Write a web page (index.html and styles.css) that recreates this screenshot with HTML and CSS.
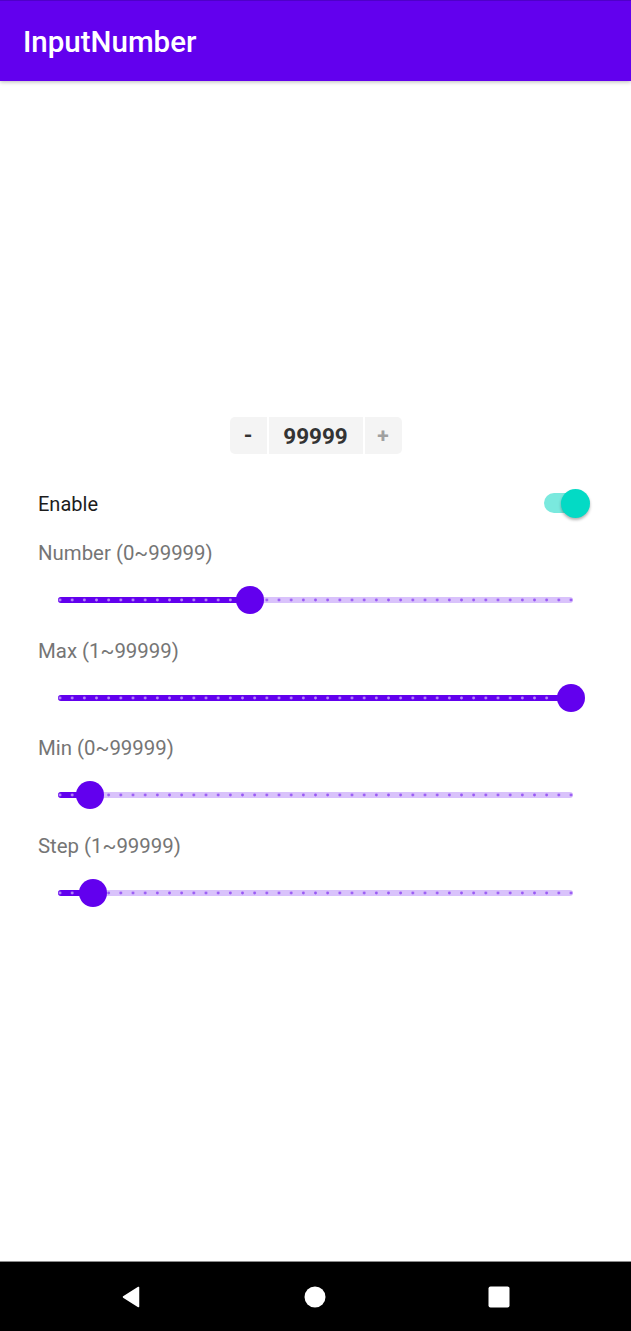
FILE: index.html
```html
<!DOCTYPE html>
<html lang="en">
<head>
<meta charset="utf-8">
<title>InputNumber</title>
<link rel="stylesheet" href="styles.css">
</head>
<body>
<svg class="defs" width="0" height="0" aria-hidden="true">
  <defs>
    <pattern id="tick-in" patternUnits="userSpaceOnUse" x="-4.0833" y="21" width="12.1667" height="6">
      <circle cx="6.0833" cy="3" r="1.4" fill="rgba(98,0,238,0.55)"/>
    </pattern>
    <pattern id="tick-act" patternUnits="userSpaceOnUse" x="-4.0833" y="21" width="12.1667" height="6">
      <circle cx="6.0833" cy="3" r="1.4" fill="rgba(255,255,255,0.55)"/>
    </pattern>
  </defs>
</svg>
<div class="app">
  <header class="appbar">
    <h1 class="appbar-title">InputNumber</h1>
  </header>
  <main class="content">
    <div class="stepper">
      <div class="stepper-btn minus">-</div>
      <div class="stepper-value">99999</div>
      <div class="stepper-btn plus">+</div>
    </div>
    <div class="enable-row">
      <span class="enable-label">Enable</span>
      <div class="switch"><span class="switch-track"></span><span class="switch-thumb"></span></div>
    </div>
    <div class="fields">
      <div class="field">
        <div class="field-label">Number (0~99999)</div>
        <svg class="slider" width="515" height="48" viewBox="0 0 515 48">
          <rect x="0" y="21" width="515" height="6" rx="3" class="track-in"/>
          <rect x="0" y="21" width="515" height="6" fill="url(#tick-in)"/>
          <rect x="0" y="21" width="192" height="6" rx="3" class="track-act"/>
          <rect x="0" y="21" width="192" height="6" fill="url(#tick-act)"/>
          <circle cx="192" cy="24" r="14" class="thumb"/>
        </svg>
      </div>
      <div class="field">
        <div class="field-label">Max (1~99999)</div>
        <svg class="slider" width="515" height="48" viewBox="0 0 515 48">
          <rect x="0" y="21" width="515" height="6" rx="3" class="track-in"/>
          <rect x="0" y="21" width="515" height="6" fill="url(#tick-in)"/>
          <rect x="0" y="21" width="513" height="6" rx="3" class="track-act"/>
          <rect x="0" y="21" width="513" height="6" fill="url(#tick-act)"/>
          <circle cx="513" cy="24" r="14" class="thumb"/>
        </svg>
      </div>
      <div class="field">
        <div class="field-label">Min (0~99999)</div>
        <svg class="slider" width="515" height="48" viewBox="0 0 515 48">
          <rect x="0" y="21" width="515" height="6" rx="3" class="track-in"/>
          <rect x="0" y="21" width="515" height="6" fill="url(#tick-in)"/>
          <rect x="0" y="21" width="32" height="6" rx="3" class="track-act"/>
          <rect x="0" y="21" width="32" height="6" fill="url(#tick-act)"/>
          <circle cx="32" cy="24" r="14" class="thumb"/>
        </svg>
      </div>
      <div class="field">
        <div class="field-label">Step (1~99999)</div>
        <svg class="slider" width="515" height="48" viewBox="0 0 515 48">
          <rect x="0" y="21" width="515" height="6" rx="3" class="track-in"/>
          <rect x="0" y="21" width="515" height="6" fill="url(#tick-in)"/>
          <rect x="0" y="21" width="35" height="6" rx="3" class="track-act"/>
          <rect x="0" y="21" width="35" height="6" fill="url(#tick-act)"/>
          <circle cx="35" cy="24" r="14" class="thumb"/>
        </svg>
      </div>
    </div>
  </main>
  <nav class="navbar">
    <svg class="nav-icon" width="22" height="22" viewBox="0 0 22 22"><path d="M18.5 1.5 L18.5 20.5 L3.5 11 Z" fill="#fff" stroke="#fff" stroke-width="1.5" stroke-linejoin="round"/></svg>
    <svg class="nav-icon" width="22" height="22" viewBox="0 0 22 22"><circle cx="11" cy="11" r="10.5" fill="#fff"/></svg>
    <svg class="nav-icon" width="22" height="22" viewBox="0 0 22 22"><rect x="0.5" y="0.5" width="21" height="21" rx="2" fill="#fff"/></svg>
  </nav>
</div>
</body>
</html>
```

FILE: styles.css
```css
* {
  box-sizing: border-box;
  margin: 0;
  padding: 0;
}

html, body {
  width: 631px;
  height: 1331px;
}

body {
  font-family: Roboto, "Noto Sans", sans-serif;
  background: #ffffff;
  overflow: hidden;
}

.defs {
  position: absolute;
  width: 0;
  height: 0;
}

.app {
  display: flex;
  flex-direction: column;
  height: 1331px;
}

.appbar {
  height: 81px;
  flex: none;
  background: #6200ee;
  border-top: 1px solid #4f00c8;
  box-shadow: 0 1px 4px rgba(0, 0, 0, 0.28);
  position: relative;
  z-index: 1;
  padding: 24px 0 0 23px;
}

.appbar-title {
  color: #ffffff;
  font-size: 29.5px;
  font-weight: 500;
  line-height: 34px;
}

.content {
  flex: 1;
  padding-top: 336px;
}

.stepper {
  display: flex;
  justify-content: center;
  gap: 2px;
}

.stepper-btn,
.stepper-value {
  height: 37px;
  background: #f4f4f4;
  display: flex;
  align-items: center;
  justify-content: center;
  font-weight: 700;
}

.stepper-btn {
  width: 37px;
  font-size: 22px;
}

.stepper-btn.minus {
  border-radius: 5px 0 0 5px;
  color: #333333;
}

.stepper-btn.plus {
  border-radius: 0 5px 5px 0;
  color: #a0a0a0;
  font-size: 21px;
}

.stepper-value {
  width: 94px;
  font-size: 22.5px;
  color: #333333;
}

.enable-row {
  display: flex;
  align-items: center;
  justify-content: space-between;
  height: 40px;
  margin-top: 30px;
  padding: 0 41px 0 38px;
}

.enable-label {
  font-size: 20px;
  line-height: 24px;
  color: #1c1c1c;
}

.switch {
  position: relative;
  width: 46px;
  height: 29px;
  margin-top: -2px;
}

.switch-track {
  position: absolute;
  left: 0;
  top: 4.5px;
  width: 40px;
  height: 20px;
  border-radius: 10px;
  background: #7ae9de;
}

.switch-thumb {
  position: absolute;
  right: 0;
  top: 0;
  width: 29px;
  height: 29px;
  border-radius: 50%;
  background: #03dac5;
  box-shadow: 0 2px 3px rgba(0, 0, 0, 0.3);
}

.fields {
  margin-top: 17px;
  display: flex;
  flex-direction: column;
  gap: 14.7px;
}

.field {
  display: flex;
  flex-direction: column;
}

.field-label {
  padding-left: 38px;
  font-size: 20.4px;
  line-height: 24px;
  color: #757575;
}

.slider {
  display: block;
  margin: 11px 0 0 58px;
  overflow: visible;
}

.track-in {
  fill: #d9c2fb;
}

.track-act {
  fill: #6200ee;
}

.thumb {
  fill: #6200ee;
}

.navbar {
  height: 70px;
  flex: none;
  background: #000000;
  border-top: 1px solid #8c8c8c;
  display: flex;
  align-items: center;
  padding-left: 120px;
  gap: 162px;
}

.nav-icon {
  display: block;
}
```
